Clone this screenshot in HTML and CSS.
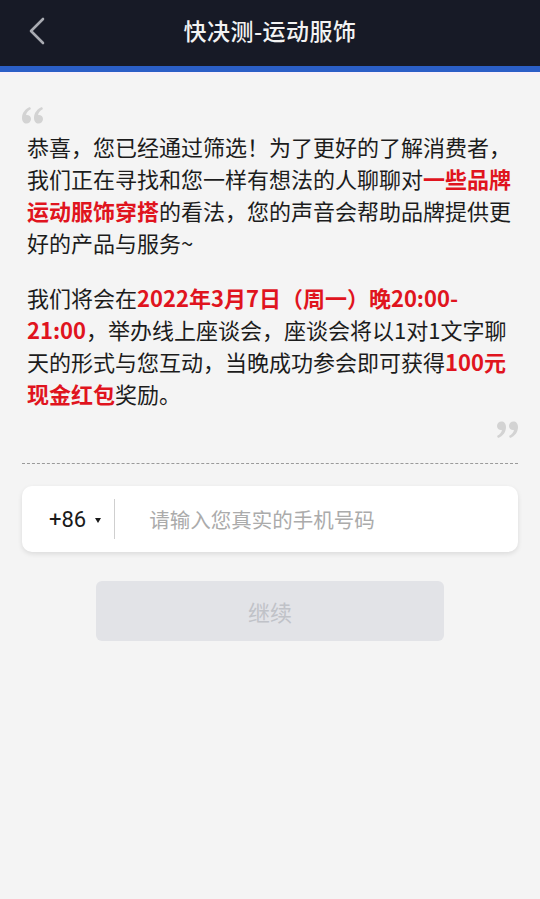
FILE: index.html
```html
<!DOCTYPE html>
<html lang="zh-CN">
<head>
<meta charset="utf-8">
<link rel="stylesheet" href="styles.css">
</head>
<body>
<div class="page">
  <header class="topbar">
    <div class="back">
      <svg width="18" height="28" viewBox="0 0 18 28"><path d="M15 2 L3 14 L15 26" fill="none" stroke="#a9abb2" stroke-width="2.6" stroke-linecap="round" stroke-linejoin="round"/></svg>
    </div>
    <div class="title">快决测-运动服饰</div>
  </header>
  <div class="accent"></div>
  <main class="content">
    <div class="quote-open">
      <svg width="22" height="18" viewBox="0 0 22 18"><path d="M8 1 C3 3 0 7 0 12 C0 15.5 2 17.5 4.5 17.5 C7 17.5 9 15.5 9 13 C9 10.5 7 9 5 9 C4.5 9 4.2 9 4 9.2 C4.5 6.5 6 4.5 9 3 Z M20 1 C15 3 12 7 12 12 C12 15.5 14 17.5 16.5 17.5 C19 17.5 21 15.5 21 13 C21 10.5 19 9 17 9 C16.5 9 16.2 9 16 9.2 C16.5 6.5 18 4.5 21 3 Z" fill="#d3d3d3"/></svg>
    </div>
    <p class="para">恭喜，您已经通过筛选！为了更好的了解消费者，我们正在寻找和您一样有想法的人聊聊对<b class="hl">一些品牌</b><b class="hl">运动服饰穿搭</b>的看法，您的声音会帮助品牌提供更好的产品与服务~</p>
    <p class="para last">我们将会在<b class="hl">2022年3月7日（周一）晚20:00-</b><b class="hl">21:00</b>，举办线上座谈会，座谈会将以1对1文字聊天的形式与您互动，当晚成功参会即可获得<b class="hl">100元</b><b class="hl">现金红包</b>奖励。</p>
    <div class="quote-close">
      <svg width="22" height="18" viewBox="0 0 22 18"><g transform="rotate(180 11 9)"><path d="M8 1 C3 3 0 7 0 12 C0 15.5 2 17.5 4.5 17.5 C7 17.5 9 15.5 9 13 C9 10.5 7 9 5 9 C4.5 9 4.2 9 4 9.2 C4.5 6.5 6 4.5 9 3 Z M20 1 C15 3 12 7 12 12 C12 15.5 14 17.5 16.5 17.5 C19 17.5 21 15.5 21 13 C21 10.5 19 9 17 9 C16.5 9 16.2 9 16 9.2 C16.5 6.5 18 4.5 21 3 Z" fill="#d3d3d3"/></g></svg>
    </div>
    <div class="dash"></div>
    <div class="phone-card">
      <div class="code">+86 <span class="tri"></span></div>
      <div class="divider"></div>
      <div class="placeholder">请输入您真实的手机号码</div>
    </div>
    <div class="btn-wrap">
      <div class="btn">继续</div>
    </div>
  </main>
</div>
</body>
</html>
```
FILE: styles.css
```css
* { box-sizing: border-box; }
html, body { margin: 0; padding: 0; }
body {
  width: 540px;
  height: 899px;
  background: #f4f4f4;
  font-family: "Noto Sans CJK SC", "Noto Sans", sans-serif;
  color: #1a1a1a;
  overflow: hidden;
}
.topbar {
  height: 66px;
  background: #171a26;
  display: flex;
  align-items: center;
  justify-content: center;
  position: relative;
}
.back {
  position: absolute;
  left: 28px;
  top: 17px;
  width: 18px;
  height: 28px;
}
.back svg { display: block; }
.title {
  color: #f2f2f2;
  font-size: 23px;
  font-weight: 500;
  letter-spacing: 0.5px;
  margin-top: -6px;
}
.accent {
  background: #2b5fc6;
  border-bottom: 3px solid #f8f0f8;
  height: 9px;
}
.content {
  padding: 0 22px;
}
.quote-open {
  padding-top: 31px;
  height: 55px;
}
.quote-open svg, .quote-close svg { display: block; }
.para {
  margin: 0 5px 23px 5px;
  font-size: 22px;
  line-height: 32px;
  color: #1c1c1c;
}
.para.last { margin-bottom: 12px; }
.hl {
  color: #e0141e;
  font-weight: 700;
}
.quote-close {
  display: flex;
  justify-content: flex-end;
  height: 42px;
}
.dash {
  border-top: 1.5px dashed #9a9a9a;
  margin-bottom: 22px;
}
.phone-card {
  height: 66px;
  background: #fff;
  border-radius: 10px;
  box-shadow: 0 2px 5px rgba(0,0,0,0.10);
  display: flex;
  align-items: center;
}
.code {
  font-family: "Roboto", "Noto Sans", sans-serif;
  font-size: 22px;
  color: #1a1a1a;
  padding-left: 27px;
  display: flex;
  align-items: center;
  gap: 9px;
}
.tri {
  width: 0;
  height: 0;
  border-left: 3.5px solid transparent;
  border-right: 3.5px solid transparent;
  border-top: 5px solid #1a1a1a;
  margin-top: 2px;
}
.divider {
  width: 1px;
  height: 40px;
  background: #cfcfcf;
  margin-left: 13px;
}
.placeholder {
  font-size: 20.5px;
  color: #ababab;
  margin-left: 34px;
}
.btn-wrap {
  display: flex;
  justify-content: center;
  padding-top: 29px;
}
.btn {
  width: 348px;
  height: 60px;
  background: #e2e3e7;
  border-radius: 6px;
  display: flex;
  align-items: center;
  justify-content: center;
  color: #c0c2c8;
  font-size: 22px;
}
```
